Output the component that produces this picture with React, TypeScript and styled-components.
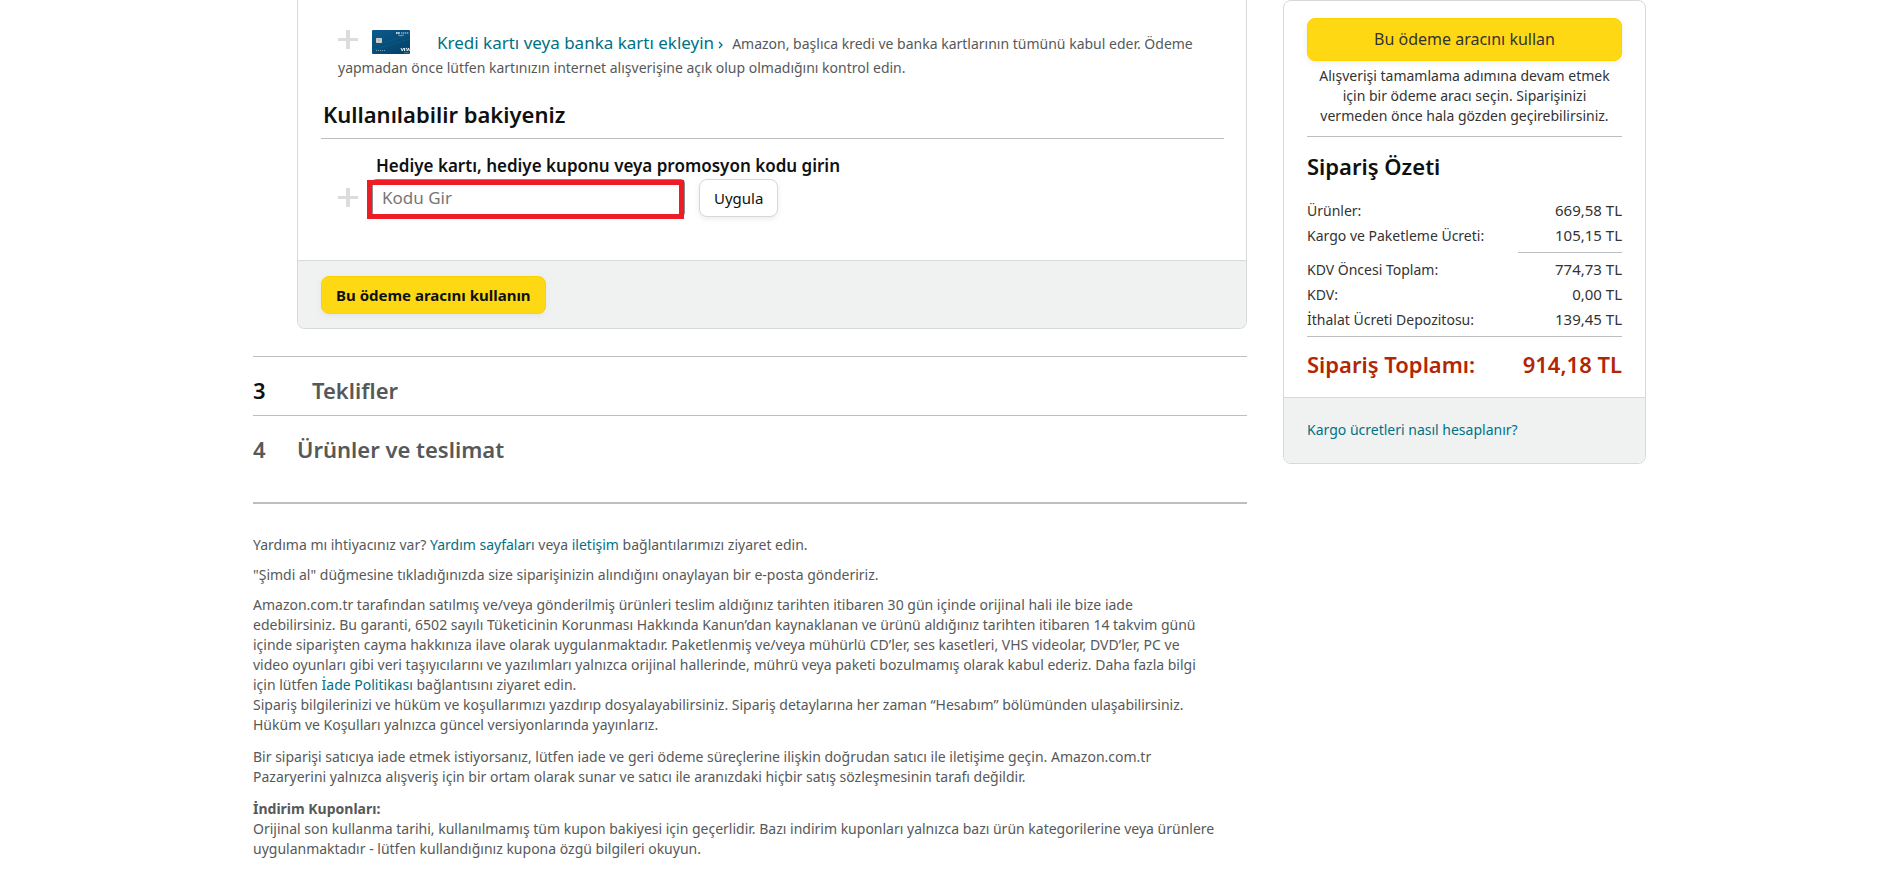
import React from "react";
import styled, { createGlobalStyle, css } from "styled-components";

const GlobalStyle = createGlobalStyle`
  * { box-sizing: border-box; }
  body {
    margin: 0;
    background: #fff;
    color: #0f1111;
    font-family: "Noto Sans", "Open Sans", "Liberation Sans", sans-serif;
    font-size: 14px;
    line-height: 20px;
  }
  h2, p, dl, dd { margin: 0; }
`;

const Page = styled.div`
  display: flex;
  align-items: flex-start;
  gap: 36px;
  padding: 0 251px 0 253px;
`;

const Main = styled.main`
  flex: 1;
  min-width: 0;
`;

const panel = css`
  border: 1px solid #d5d9d9;
  border-radius: 8px;
  overflow: hidden;
  background: #fff;
`;

const PaymentCard = styled.section`
  ${panel}
  margin-left: 44px;
  border-top: 0;
  border-top-left-radius: 0;
  border-top-right-radius: 0;
`;

const PaymentBody = styled.div`
  padding: 30px 22px 43px 23px;
`;

const AddCard = styled.div`
  padding-left: 17px;
  color: #565959;
  line-height: 25px;
`;

const AddCardRow = styled.div`
  display: flex;
  align-items: baseline;
  height: 25px;
  white-space: nowrap;
`;

const IconPair = styled.span`
  display: flex;
  align-items: flex-start;
  align-self: flex-start;
  gap: 14px;
  width: 99px;
`;

const Link = styled.a<{ $large?: boolean }>`
  color: #007185;
  text-decoration: none;
  font-size: ${(p) => (p.$large ? "17px" : "inherit")};
`;

const Chevron = styled.svg`
  margin: 0 9px 0 4px;
`;

const Heading = styled.h2`
  font-size: 22px;
  line-height: 32px;
  font-weight: 600;
`;

const BalanceHeading = styled(Heading)`
  margin-top: 18px;
  padding: 0 2px 8px;
  border-bottom: 1px solid #bbbfbf;
`;

const CodeForm = styled.form`
  display: grid;
  grid-template-columns: 20px 313px auto;
  column-gap: 14px;
  justify-content: start;
  align-items: center;
  padding: 15px 0 0 17px;
`;

const CodeLabel = styled.label`
  grid-column: 2 / -1;
  padding: 0 0 1px 4px;
  font-size: 17px;
  line-height: 24px;
  font-weight: 600;
`;

const CodeField = styled.div`
  position: relative;
  &::after {
    content: "";
    position: absolute;
    inset: 1px 1px -2px -5px;
    border: 5px solid #ee1c25;
    pointer-events: none;
  }
`;

const CodeInput = styled.input`
  display: block;
  width: 100%;
  height: 38px;
  padding: 0 9px 2px;
  border: 1px solid #888c8c;
  border-radius: 4px;
  font: inherit;
  font-size: 17px;
  &::placeholder { color: #767676; opacity: 1; }
`;

const Button = styled.button<{ $primary?: boolean; $wide?: boolean }>`
  height: ${(p) => (p.$wide ? "43px" : "38px")};
  width: ${(p) => (p.$wide ? "100%" : "auto")};
  justify-self: start;
  padding: 0 14px 1px;
  border: 1px solid ${(p) => (p.$primary ? "#fcd200" : "#d5d9d9")};
  border-radius: 8px;
  background: ${(p) => (p.$primary ? "#ffd814" : "#fff")};
  box-shadow: 0 2px 5px rgba(213, 217, 217, 0.5);
  color: ${(p) => (p.$wide ? "#333" : "#0f1111")};
  font: inherit;
  font-weight: ${(p) => (p.$primary && !p.$wide ? 700 : 400)};
  font-size: ${(p) => (p.$wide ? "16px" : "15px")};
  white-space: nowrap;
`;

const PaymentFooter = styled.div`
  padding: 15px 23px 14px;
  border-top: 1px solid #d5d9d9;
  background: #f0f2f2;
`;

const Steps = styled.div`
  margin-top: 27px;
  border-bottom: 2px solid #bbbfbf;
`;

const Step = styled.div<{ $last?: boolean; $indented?: boolean }>`
  display: flex;
  gap: ${(p) => (p.$indented ? "46px" : "31px")};
  padding: ${(p) => (p.$last ? "17px 0 37px" : "17px 0 9px")};
  border-top: 1px solid #bbbfbf;
  color: #565959;
`;

const StepNumber = styled(Heading).attrs({ as: "span" })<{ $dark?: boolean }>`
  width: 13px;
  color: ${(p) => (p.$dark ? "#0f1111" : "inherit")};
`;

const Legal = styled.footer`
  display: flex;
  flex-direction: column;
  gap: 12px;
  padding: 31px 0 16px;
  color: #565959;
  white-space: nowrap;
`;

const Intro = styled.div`
  display: flex;
  flex-direction: column;
  gap: 10px;
`;

const Sidebar = styled.aside`
  ${panel}
  width: 363px;
  color: #333;
`;

const SummaryBody = styled.div`
  padding: 17px 23px 16px;
`;

const Note = styled.p`
  padding: 5px 0;
  text-align: center;
  white-space: nowrap;
`;

const SummaryHeading = styled(Heading)`
  margin-top: 5px;
  padding: 13px 0 16px;
  border-top: 1px solid #bbbfbf;
  color: #0f1111;
`;

const Row = styled.div`
  display: flex;
  justify-content: space-between;
  align-items: baseline;
  height: 25px;
  line-height: 25px;
`;

const Amount = styled.dd`
  font-size: 15px;
`;

const Rule = styled.hr<{ $short?: boolean }>`
  width: ${(p) => (p.$short ? "104px" : "100%")};
  margin: ${(p) => (p.$short ? "4px 0 4px auto" : "4px 0 10px")};
  border: 0;
  border-top: 1px solid #bbbfbf;
`;

const Total = styled(Row)`
  height: 34px;
  color: #b12704;
  font-size: 22px;
  line-height: 34px;
  font-weight: 600;
`;

const SummaryFooter = styled.div`
  padding: 22px 23px 23px;
  border-top: 1px solid #d5d9d9;
  background: #f0f2f2;
`;

const PlusIcon = () => (
  <svg width="20" height="20" viewBox="0 0 20 20" aria-hidden="true">
    <path d="M8 0h4v8h8v3h-8v8H8v-8H0V8h8z" fill="#dcdcdc" />
  </svg>
);

const CardIcon = () => (
  <svg width="38" height="24" viewBox="0 0 38 24" aria-hidden="true">
    <defs>
      <linearGradient id="cardBlue" x1="0" y1="0" x2="1" y2="1">
        <stop offset="0" stopColor="#0a5c8c" />
        <stop offset="1" stopColor="#053f66" />
      </linearGradient>
    </defs>
    <rect width="38" height="24" rx="1" fill="url(#cardBlue)" />
    <path d="M0 16 38 5M0 20 38 9" stroke="#0c6595" strokeWidth="1" opacity=".5" />
    <rect x="4" y="8" width="6" height="5" rx="1" fill="#d6d2cd" />
    <path d="M4 10h6M7 8v5" stroke="#a79f96" strokeWidth=".5" />
    <path d="M24 3h4" stroke="#fff" strokeWidth="1.6" strokeDasharray="1.6 .5" />
    <path d="M29 3h8" stroke="#8bb3cb" strokeWidth="1.6" strokeDasharray="1.4 .6" />
    <path d="M26 5q3 1.300 6 0" fill="none" stroke="#a9c6d8" strokeWidth=".7" />
    <path d="M4 20.500h10" stroke="#7ba8c2" strokeWidth="1" strokeDasharray="1 1" />
    <path d="m29 18 1.300 3 1.300-3M32.500 18v3M35 18.300h-1l1 1.200-1 1.200M35.500 21l1-3 1 3" fill="none" stroke="#fff" strokeWidth=".9" />
    <path d="M32 22.700h5" stroke="#7ba8c2" strokeWidth=".6" />
  </svg>
);

const charges = [
  ["Ürünler:", "669,58 TL"],
  ["Kargo ve Paketleme Ücreti:", "105,15 TL"],
];

const taxes = [
  ["KDV Öncesi Toplam:", "774,73 TL"],
  ["KDV:", "0,00 TL"],
  ["İthalat Ücreti Depozitosu:", "139,45 TL"],
];

const Rows = ({ items }: { items: string[][] }) => (
  <dl>
    {items.map(([name, amount]) => (
      <Row key={name}>
        <dt>{name}</dt>
        <Amount>{amount}</Amount>
      </Row>
    ))}
  </dl>
);

export default function App() {
  return (
    <>
      <GlobalStyle />
      <Page>
        <Main>
          <PaymentCard>
            <PaymentBody>
              <AddCard>
                <AddCardRow>
                  <IconPair>
                    <PlusIcon />
                    <CardIcon />
                  </IconPair>
                  <Link $large href="#kart">Kredi kartı veya banka kartı ekleyin</Link>
                  <Chevron width="5" height="8" viewBox="0 0 5 8" aria-hidden="true">
                    <path d="M1 1l3 3-3 3" fill="none" stroke="#007185" strokeWidth="1.3" />
                  </Chevron>
                  <span>Amazon, başlıca kredi ve banka kartlarının tümünü kabul eder. Ödeme</span>
                </AddCardRow>
                yapmadan önce lütfen kartınızın internet alışverişine açık olup olmadığını kontrol edin.
              </AddCard>
              <BalanceHeading>Kullanılabilir bakiyeniz</BalanceHeading>
              <CodeForm onSubmit={(e) => e.preventDefault()}>
                <CodeLabel htmlFor="code">Hediye kartı, hediye kuponu veya promosyon kodu girin</CodeLabel>
                <PlusIcon />
                <CodeField>
                  <CodeInput id="code" placeholder="Kodu Gir" />
                </CodeField>
                <Button type="submit">Uygula</Button>
              </CodeForm>
            </PaymentBody>
            <PaymentFooter>
              <Button $primary type="button">Bu ödeme aracını kullanın</Button>
            </PaymentFooter>
          </PaymentCard>

          <Steps>
            <Step $indented>
              <StepNumber $dark>3</StepNumber>
              <Heading>Teklifler</Heading>
            </Step>
            <Step $last>
              <StepNumber>4</StepNumber>
              <Heading>Ürünler ve teslimat</Heading>
            </Step>
          </Steps>

          <Legal>
            <Intro>
              <p>
                Yardıma mı ihtiyacınız var? <Link href="#yardim">Yardım sayfaları</Link> veya{" "}
                <Link href="#iletisim">iletişim</Link> bağlantılarımızı ziyaret edin.
              </p>
              <p>"Şimdi al" düğmesine tıkladığınızda size siparişinizin alındığını onaylayan bir e-posta göndeririz.</p>
              <p>
                Amazon.com.tr tarafından satılmış ve/veya gönderilmiş ürünleri teslim aldığınız tarihten itibaren 30 gün içinde orijinal hali ile bize iade
                <br />
                edebilirsiniz. Bu garanti, 6502 sayılı Tüketicinin Korunması Hakkında Kanun’dan kaynaklanan ve ürünü aldığınız tarihten itibaren 14 takvim günü
                <br />
                içinde siparişten cayma hakkınıza ilave olarak uygulanmaktadır. Paketlenmiş ve/veya mühürlü CD’ler, ses kasetleri, VHS videolar, DVD’ler, PC ve
                <br />
                video oyunları gibi veri taşıyıcılarını ve yazılımları yalnızca orijinal hallerinde, mührü veya paketi bozulmamış olarak kabul ederiz. Daha fazla bilgi
                <br />
                için lütfen <Link href="#iade">İade Politikası</Link> bağlantısını ziyaret edin.
                <br />
                Sipariş bilgilerinizi ve hüküm ve koşullarımızı yazdırıp dosyalayabilirsiniz. Sipariş detaylarına her zaman “Hesabım” bölümünden ulaşabilirsiniz.
                <br />
                Hüküm ve Koşulları yalnızca güncel versiyonlarında yayınlarız.
              </p>
            </Intro>
            <p>
              Bir siparişi satıcıya iade etmek istiyorsanız, lütfen iade ve geri ödeme süreçlerine ilişkin doğrudan satıcı ile iletişime geçin. Amazon.com.tr
              <br />
              Pazaryerini yalnızca alışveriş için bir ortam olarak sunar ve satıcı ile aranızdaki hiçbir satış sözleşmesinin tarafı değildir.
            </p>
            <p>
              <strong>İndirim Kuponları:</strong>
              <br />
              Orijinal son kullanma tarihi, kullanılmamış tüm kupon bakiyesi için geçerlidir. Bazı indirim kuponları yalnızca bazı ürün kategorilerine veya ürünlere
              <br />
              uygulanmaktadır - lütfen kullandığınız kupona özgü bilgileri okuyun.
            </p>
          </Legal>
        </Main>

        <Sidebar>
          <SummaryBody>
            <Button $primary $wide type="button">Bu ödeme aracını kullan</Button>
            <Note>
              Alışverişi tamamlama adımına devam etmek
              <br />
              için bir ödeme aracı seçin. Siparişinizi
              <br />
              vermeden önce hala gözden geçirebilirsiniz.
            </Note>
            <SummaryHeading>Sipariş Özeti</SummaryHeading>
            <Rows items={charges} />
            <Rule $short />
            <Rows items={taxes} />
            <Rule />
            <Total>
              <span>Sipariş Toplamı:</span>
              <span>914,18 TL</span>
            </Total>
          </SummaryBody>
          <SummaryFooter>
            <Link href="#kargo">Kargo ücretleri nasıl hesaplanır?</Link>
          </SummaryFooter>
        </Sidebar>
      </Page>
    </>
  );
}
